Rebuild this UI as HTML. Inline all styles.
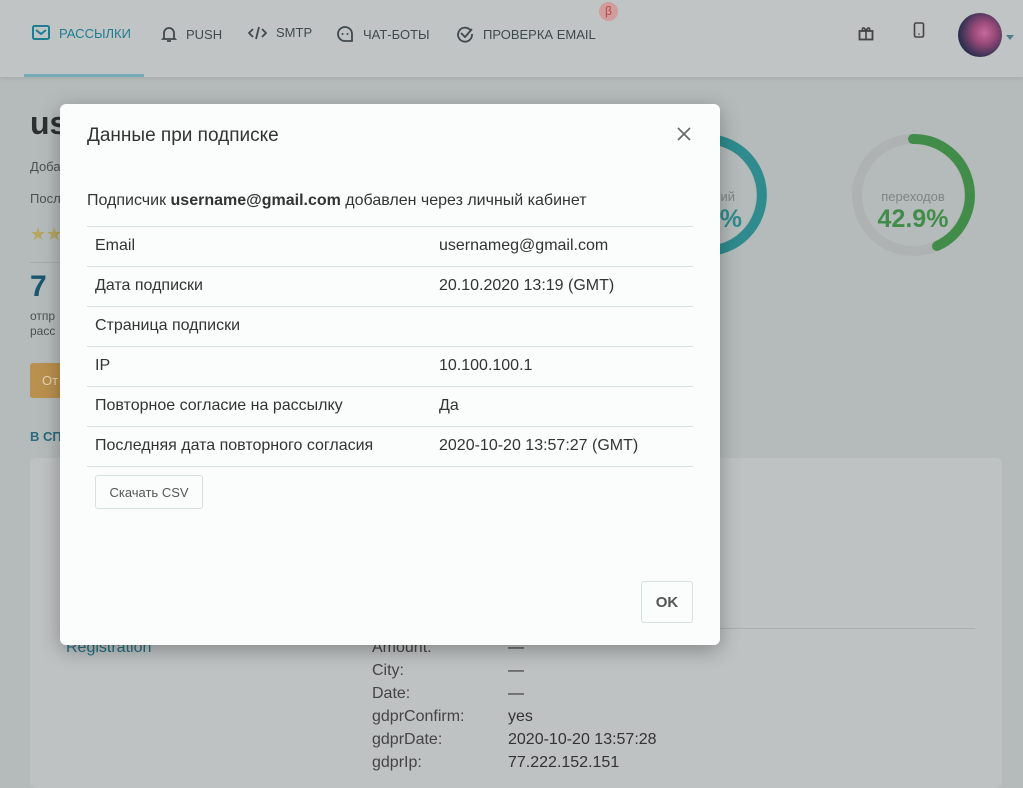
<!DOCTYPE html>
<html><head><meta charset="utf-8"><style>
*{box-sizing:border-box;margin:0;padding:0}
body{width:1023px;height:774px;overflow:hidden;background:#b5bbbb;font-family:"Liberation Sans",sans-serif;position:relative;color:#333}
.hdr{position:absolute;left:0;top:0;width:1023px;height:77px;background:#c0c4c4;box-shadow:0 2px 4px rgba(0,0,0,.08)}
.nav{position:absolute;top:25px;font-size:13px;color:#3f4a4e;display:flex;align-items:center;gap:9px}
.abs{position:absolute}
.modal{position:absolute;left:60px;top:104px;width:660px;height:541px;background:#fbfdfc;border-radius:6px;box-shadow:0 5px 20px rgba(0,0,0,.3)}
.row{position:absolute;left:27px;width:606px;height:40px;border-top:1px solid #d5e2e0;font-size:16px;color:#333}
.row span{position:absolute;top:10px}
.btn{position:absolute;border:1px solid #d5e2e0;border-radius:3px;background:#fbfdfc;color:#555;display:flex;align-items:center;justify-content:center}
.k{position:absolute;left:372px;font-size:16px;color:#444}
.v{position:absolute;left:508px;font-size:16px;color:#333}
</style></head><body>
<div class="hdr">
 <div class="nav" style="left:32px;color:#1e7d90"><svg width="18" height="16" viewBox="0 0 18 16"><rect x="1" y="1" width="16" height="13" rx="1.5" fill="none" stroke="#1e7d90" stroke-width="2"/><path d="M4 5l5 4 5-4" fill="none" stroke="#1e7d90" stroke-width="2"/></svg>РАССЫЛКИ</div>
 <div class="abs" style="left:24px;top:74px;width:120px;height:3px;background:#73a9b5"></div>
 <div class="nav" style="left:161px"><svg width="16" height="18" viewBox="0 0 16 18"><path d="M3 13V8a5 5 0 0110 0v5l1 1H2z M6 16h4" fill="none" stroke="#3f4a4e" stroke-width="1.8"/></svg>PUSH</div>
 <div class="nav" style="left:248px"><svg width="19" height="14" viewBox="0 0 19 14"><path d="M5 3L1 7l4 4M14 3l4 4-4 4M11 1L8 13" fill="none" stroke="#3f4a4e" stroke-width="1.8"/></svg>SMTP</div>
 <div class="nav" style="left:336px"><svg width="18" height="18" viewBox="0 0 18 18"><path d="M9 16a7 7 0 117-7v7z" fill="none" stroke="#3f4a4e" stroke-width="1.8"/><circle cx="6.5" cy="9" r="1" fill="#3f4a4e"/><circle cx="11.5" cy="9" r="1" fill="#3f4a4e"/></svg>ЧАТ-БОТЫ</div>
 <div class="nav" style="left:456px"><svg width="18" height="18" viewBox="0 0 18 18"><path d="M15 6A7 7 0 1016 9M5 8l4 4 7-8" fill="none" stroke="#3f4a4e" stroke-width="1.8"/></svg>ПРОВЕРКА EMAIL</div>
 <div class="abs" style="left:599px;top:2px;width:19px;height:19px;border-radius:50%;background:#d09c9c;color:#b44;font-size:12px;text-align:center;line-height:18px">β</div>
 <svg class="abs" style="left:858px;top:25px" width="16" height="16" viewBox="0 0 16 16"><rect x="1.5" y="6" width="13" height="8.5" fill="none" stroke="#444" stroke-width="1.8"/><path d="M8 6v9M8 6C6 1 3 3 5 6M8 6c2-5 5-3 3 0" fill="none" stroke="#444" stroke-width="1.6"/></svg>
 <svg class="abs" style="left:913px;top:22px" width="12" height="16" viewBox="0 0 12 16"><rect x="1.5" y="1" width="9" height="14" rx="1.5" fill="none" stroke="#444" stroke-width="1.6"/><circle cx="6" cy="12" r=".8" fill="#444"/></svg>
 <div class="abs" style="left:958px;top:13px;width:44px;height:44px;border-radius:50%;background:radial-gradient(circle at 60% 45%,#c66a9a 0,#9a4a7a 30%,#2e3050 70%)"></div>
 <div class="abs" style="left:1006px;top:35px;border:4px solid transparent;border-top:5px solid #527e8a"></div>
</div>
<div class="abs" style="left:30px;top:105px;font-size:32px;font-weight:700;color:#2c3030">us</div>
<div class="abs" style="left:30px;top:159px;font-size:13px;color:#4a5050">Доба</div>
<div class="abs" style="left:30px;top:191px;font-size:13px;color:#4a5050">Посл</div>
<div class="abs" style="left:30px;top:224px;font-size:18px;color:#b6a660">★★</div>
<div class="abs" style="left:30px;top:262px;width:40px;height:1px;background:#a4acac"></div>
<div class="abs" style="left:30px;top:270px;font-size:30px;font-weight:700;color:#1a5670">7</div>
<div class="abs" style="left:30px;top:309px;font-size:12px;color:#4a5050;line-height:15px">отпр<br>расс</div>
<div class="abs" style="left:30px;top:363px;width:40px;height:35px;background:#b9904e;border-radius:3px;color:#e5d5b5;font-size:13px;padding:10px 0 0 12px">От</div>
<div class="abs" style="left:30px;top:429px;font-size:13px;color:#2b6a7e;font-weight:600">В СП</div>
<svg class="abs" style="left:630px;top:130px" width="370" height="130">
 <circle cx="75" cy="65" r="56" fill="none" stroke="#aeb2b2" stroke-width="10"/>
 <path d="M75 9A56 56 0 1 1 40 108" fill="none" stroke="#2f8b8d" stroke-width="10" stroke-linecap="round"/>
 <text x="105" y="71" text-anchor="end" font-size="13" fill="#7f8585" font-family="Liberation Sans">открытий</text>
 <text x="112" y="97" text-anchor="end" font-size="25" font-weight="700" fill="#2f8b8d" font-family="Liberation Sans">71.4%</text>
 <circle cx="283" cy="65" r="56" fill="none" stroke="#aeb2b2" stroke-width="10"/>
 <path d="M283 9A56 56 0 0 1 307 116" fill="none" stroke="#428c4a" stroke-width="10" stroke-linecap="round"/>
 <text x="283" y="71" text-anchor="middle" font-size="13" fill="#7f8585" font-family="Liberation Sans">переходов</text>
 <text x="283" y="97" text-anchor="middle" font-size="25" font-weight="700" fill="#428c4a" font-family="Liberation Sans">42.9%</text>
</svg>
<div class="abs" style="left:30px;top:458px;width:972px;height:330px;background:#bec2c2;border-radius:6px"></div>
<div class="abs" style="left:60px;top:628px;width:915px;height:1px;background:#a8b0b0"></div>
<div class="abs" style="left:66px;top:639px;font-size:16px;color:#246f80">Registration</div>
<div class="k" style="top:639px">Amount:</div><div class="v" style="top:639px">—</div>
<div class="k" style="top:662px">City:</div><div class="v" style="top:662px">—</div>
<div class="k" style="top:685px">Date:</div><div class="v" style="top:685px">—</div>
<div class="k" style="top:708px">gdprConfirm:</div><div class="v" style="top:708px">yes</div>
<div class="k" style="top:731px">gdprDate:</div><div class="v" style="top:731px">2020-10-20 13:57:28</div>
<div class="k" style="top:754px">gdprIp:</div><div class="v" style="top:754px">77.222.152.151</div>
<div class="modal">
 <div class="abs" style="left:27px;top:21px;font-size:19px;color:#333">Данные при подписке</div>
 <svg class="abs" style="left:617px;top:23px" width="14" height="14"><path d="M1 1l12 12M13 1L1 13" stroke="#666" stroke-width="1.6"/></svg>
 <div class="abs" style="left:27px;top:88px;font-size:16px">Подписчик <b>username@gmail.com</b> добавлен через личный кабинет</div>
 <div class="row" style="top:122px"><span style="left:8px">Email</span><span style="left:352px">usernameg@gmail.com</span></div>
 <div class="row" style="top:162px"><span style="left:8px">Дата подписки</span><span style="left:352px">20.10.2020 13:19 (GMT)</span></div>
 <div class="row" style="top:202px"><span style="left:8px">Страница подписки</span></div>
 <div class="row" style="top:242px"><span style="left:8px">IP</span><span style="left:352px">10.100.100.1</span></div>
 <div class="row" style="top:282px"><span style="left:8px">Повторное согласие на рассылку</span><span style="left:352px">Да</span></div>
 <div class="row" style="top:322px"><span style="left:8px">Последняя дата повторного согласия</span><span style="left:352px">2020-10-20 13:57:27 (GMT)</span></div>
 <div class="row" style="top:362px;height:1px"></div>
 <div class="btn" style="left:35px;top:371px;width:108px;height:34px;font-size:13px">Скачать CSV</div>
 <div class="btn" style="left:581px;top:477px;width:52px;height:42px;font-size:15px;font-weight:700;color:#555">OK</div>
</div>
</body></html>
